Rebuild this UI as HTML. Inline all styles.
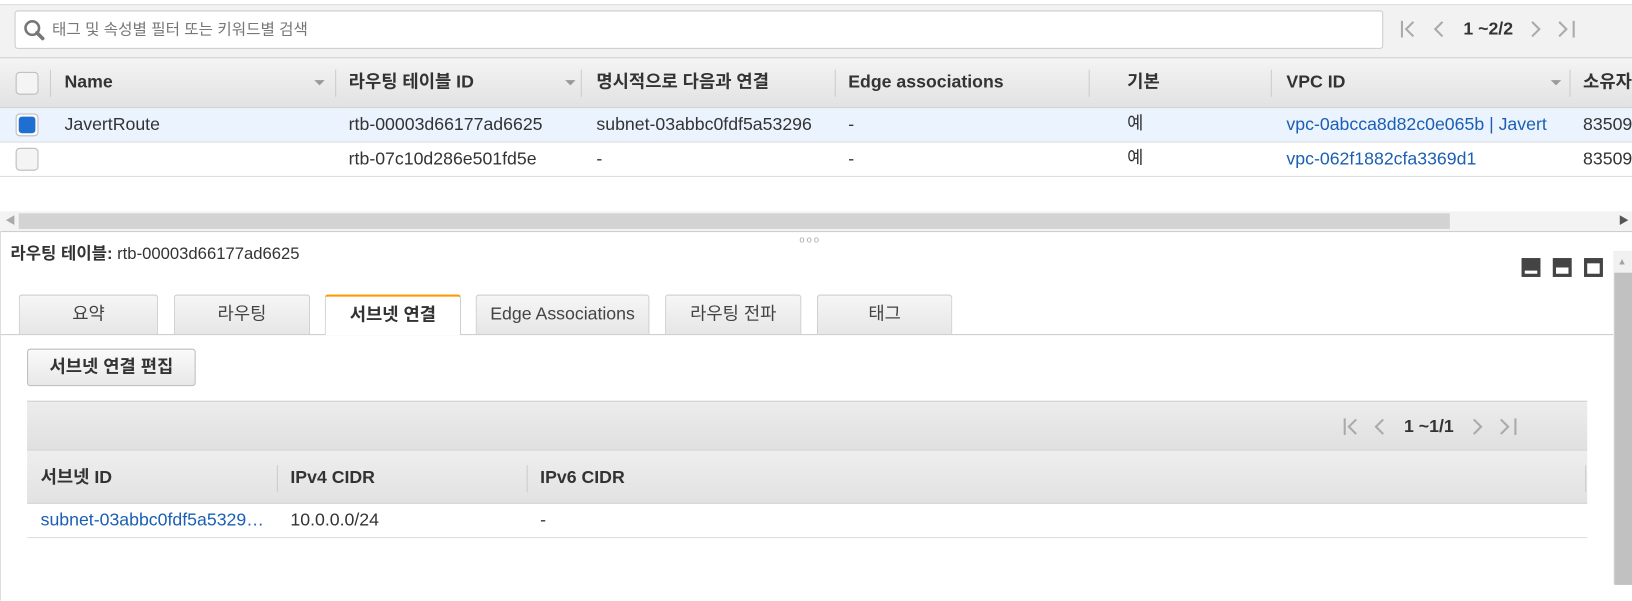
<!DOCTYPE html>
<html><head><meta charset="utf-8"><style>
*{box-sizing:border-box;margin:0;padding:0}
body{width:1632px;height:577px;overflow:hidden;background:#fff;font-family:"Liberation Sans","Noto Sans CJK KR",sans-serif;font-size:17px;color:#333;position:relative}
#w{position:absolute;left:0;top:0;width:1568px;height:555px;transform:scale(1.0408);transform-origin:0 0}
.a{position:absolute}
span{line-height:20px;white-space:nowrap}
.top{left:0;top:4px;width:1568px;height:51px;background:#f2f2f2;border-top:1px solid #ddd}
.search{left:14px;top:10px;width:1315px;height:37px;background:#fff;border:1px solid #ccc;border-radius:3px}
.hdr{left:0;top:55px;width:1568px;height:49px;background:linear-gradient(#f4f4f4,#e2e2e2);border-top:1px solid #ccc;border-bottom:1px solid #ccc}
.hdr span,.sh span{position:absolute;font-weight:bold;color:#333;top:13px}
.sep{position:absolute;width:1px;background:#ccc;top:11px;height:26px}
.arr{position:absolute;top:21px;width:0;height:0;border-left:5px solid transparent;border-right:5px solid transparent;border-top:5px solid #999}
.cb{position:absolute;width:22px;height:22px;border:1px solid #bbb;border-radius:4px;background:#f4f4f4}
.row{left:0;width:1568px;height:33px;border-bottom:1px solid #ddd}
.row span{position:absolute;top:6px}
.lnk{color:#1a5fb4}
.tab{position:absolute;top:283px;height:38px;background:linear-gradient(#f6f6f6,#e6e6e6);border:1px solid #ccc;border-bottom:none;border-radius:3px 3px 0 0;text-align:center;line-height:36px;color:#444}
</style></head><body><div id="w">
<div class="a top"></div>
<div class="a search">
<svg class="a" style="left:7px;top:7px" width="22" height="22" viewBox="0 0 22 22"><circle cx="9" cy="9" r="6.5" fill="none" stroke="#777" stroke-width="2.5"/><path d="M13.5 13.5L19 19" stroke="#777" stroke-width="3.5" stroke-linecap="round"/></svg>
<span class="a" style="left:35px;top:8px;color:#777;font-size:15px">태그 및 속성별 필터 또는 키워드별 검색</span></div>
<svg class="a" style="left:1343px;top:18px" width="175" height="20" viewBox="0 0 175 20"><g fill="none" stroke="#aaa" stroke-width="2"><path d="M4 2v16M15 3l-7 7 7 7M43 3l-7 7 7 7M129 3l7 7-7 7M155 3l7 7-7 7M169 2v16"/></g></svg>
<span class="a" style="left:1406px;top:18px;font-weight:bold">1 ~2/2</span>

<div class="a hdr">
<div class="cb" style="left:15px;top:13px"></div>
<div class="sep" style="left:48px"></div><span style="left:62px">Name</span><div class="arr" style="left:302px"></div>
<div class="sep" style="left:322px"></div><span style="left:335px">라우팅 테이블 ID</span><div class="arr" style="left:543px"></div>
<div class="sep" style="left:558px"></div><span style="left:573px">명시적으로 다음과 연결</span>
<div class="sep" style="left:802px"></div><span style="left:815px">Edge associations</span>
<div class="sep" style="left:1046px"></div><span style="left:1083px">기본</span>
<div class="sep" style="left:1221px"></div><span style="left:1236px">VPC ID</span><div class="arr" style="left:1490px"></div>
<div class="sep" style="left:1508px"></div><span style="left:1521px">소유자</span>
</div>
<div class="a row" style="top:104px;background:#eaf3fe">
<div class="cb" style="left:15px;top:5px;background:#fff"><div style="position:absolute;left:2px;top:2px;width:16px;height:16px;background:#1e6fd1;border-radius:3px"></div></div>
<span style="left:62px">JavertRoute</span><span style="left:335px">rtb-00003d66177ad6625</span><span style="left:573px">subnet-03abbc0fdf5a53296</span><span style="left:815px">-</span><span style="left:1083px;top:5px">예</span><span class="lnk" style="left:1236px">vpc-0abcca8d82c0e065b | Javert</span><span style="left:1521px">83509</span></div>
<div class="a row" style="top:137px">
<div class="cb" style="left:15px;top:5px"></div>
<span style="left:335px">rtb-07c10d286e501fd5e</span><span style="left:573px">-</span><span style="left:815px">-</span><span style="left:1083px;top:5px">예</span><span class="lnk" style="left:1236px">vpc-062f1882cfa3369d1</span><span style="left:1521px">83509</span></div>

<div class="a" style="left:0;top:203px;width:1568px;height:19px;background:#f3f3f3"></div>
<div class="a" style="left:18px;top:205px;width:1375px;height:15px;background:#d3d3d3"></div>
<span class="a" style="left:5px;top:203px;font-size:10px;color:#aaa">◀</span>
<span class="a" style="left:1555px;top:203px;font-size:10px;color:#555">▶</span>
<div class="a" style="left:0;top:222px;width:1568px;height:1px;background:#ccc"></div>
<span class="a" style="left:768px;top:220px;font-size:9px;color:#aaa;letter-spacing:2px">ooo</span>

<span class="a" style="left:10px;top:235px;font-size:16px"><b>라우팅 테이블:</b> rtb-00003d66177ad6625</span>
<div class="a" style="left:1462px;top:248px;width:18px;height:18px;background:#444;border:2px solid #444;border-bottom:3px solid #444"><div style="position:absolute;left:1px;right:1px;bottom:0;height:3px;background:#fff"></div></div>
<div class="a" style="left:1492px;top:248px;width:18px;height:18px;background:#444;border:2px solid #444;border-bottom:3px solid #444"><div style="position:absolute;left:1px;right:1px;bottom:0;height:6px;background:#fff"></div></div>
<div class="a" style="left:1522px;top:248px;width:18px;height:18px;background:#444;border:2px solid #444;border-bottom:3px solid #444"><div style="position:absolute;left:1px;right:1px;bottom:0;height:10px;background:#fff"></div></div>
<div class="a" style="left:1550px;top:241px;width:18px;height:320px;background:#f1f1f1"></div>
<div class="a" style="left:1551px;top:262px;width:17px;height:300px;background:#c1c1c1"></div>
<span class="a" style="left:1554px;top:241px;font-size:9px;color:#a3a3a3">▲</span>

<div class="a" style="left:0;top:321px;width:1550px;height:1px;background:#ccc"></div>
<div class="tab" style="left:18px;width:134px">요약</div>
<div class="tab" style="left:167px;width:131px">라우팅</div>
<div class="tab" style="left:312px;width:131px;height:39px;background:#fff;border-top:2px solid #f90;font-weight:bold;color:#333">서브넷 연결</div>
<div class="tab" style="left:457px;width:167px">Edge Associations</div>
<div class="tab" style="left:639px;width:131px">라우팅 전파</div>
<div class="tab" style="left:785px;width:130px">태그</div>

<div class="a" style="left:26px;top:335px;width:162px;height:36px;border:1px solid #bbb;border-radius:3px;background:linear-gradient(#fafafa,#e8e8e8);font-weight:bold;text-align:center;line-height:34px">서브넷 연결 편집</div>

<div class="a" style="left:26px;top:385px;width:1499px;height:48px;background:linear-gradient(#ececec,#e0e0e0);border-top:1px solid #ccc;border-bottom:1px solid #ccc"></div>
<svg class="a" style="left:1288px;top:400px" width="175" height="20" viewBox="0 0 175 20"><g fill="none" stroke="#aaa" stroke-width="2"><path d="M4 2v16M15 3l-7 7 7 7M41 3l-7 7 7 7M128 3l7 7-7 7M154 3l7 7-7 7M168 2v16"/></g></svg>
<span class="a" style="left:1349px;top:400px;font-weight:bold">1 ~1/1</span>
<div class="a sh" style="left:26px;top:433px;width:1499px;height:51px;background:linear-gradient(#eeeeee,#e2e2e2);border-bottom:1px solid #ccc">
<span style="left:13px;top:16px">서브넷 ID</span><div class="sep" style="left:240px;top:14px"></div>
<span style="left:253px;top:16px">IPv4 CIDR</span><div class="sep" style="left:480px;top:14px"></div>
<span style="left:493px;top:16px">IPv6 CIDR</span><div class="sep" style="left:1497px;top:14px"></div></div>
<div class="a" style="left:26px;top:484px;width:1499px;height:33px;border-bottom:1px solid #ddd">
<span class="a lnk" style="left:13px;top:6px">subnet-03abbc0fdf5a5329…</span><span class="a" style="left:253px;top:6px">10.0.0.0/24</span><span class="a" style="left:493px;top:6px">-</span></div>
<div class="a" style="left:0;top:222px;width:1px;height:355px;background:#ddd"></div>
</div></body></html>
